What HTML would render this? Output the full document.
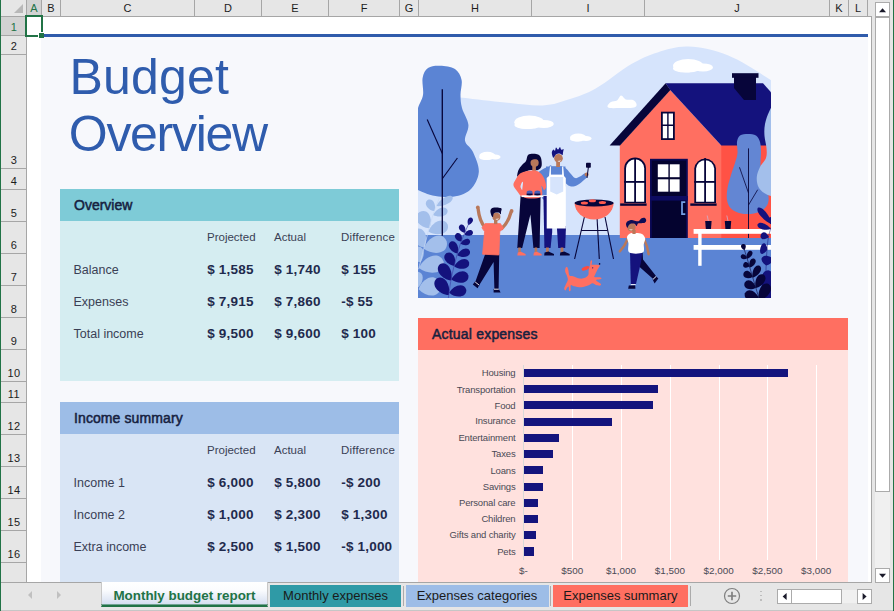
<!DOCTYPE html>
<html><head><meta charset="utf-8"><title>Budget Overview</title>
<style>
*{margin:0;padding:0;box-sizing:border-box}
html,body{width:894px;height:611px;overflow:hidden;background:#e6e6e6;font-family:"Liberation Sans",sans-serif;}
.a{position:absolute}
#root{position:relative;width:894px;height:611px;background:#e6e6e6;overflow:hidden}
.ch{position:absolute;top:0;height:16px;font-size:11px;line-height:16px;text-align:center;color:#1c1c1c;border-right:1px solid #a6a6a6}
.rh{position:absolute;left:1px;width:25px;font-size:11px;text-align:center;color:#1c1c1c;border-bottom:1px solid #a6a6a6}
.rh span{position:absolute;left:1px;right:0;bottom:0;line-height:15px;letter-spacing:0.5px}
.t{position:absolute;white-space:nowrap}
.hdt{font-size:14px;color:#16213f;-webkit-text-stroke:0.5px #16213f}
.lbl{font-size:12.5px;color:#3a3f55}
.num{font-size:13.5px;font-weight:bold;color:#1f2a4d;letter-spacing:0.2px}
.hd{font-size:11.5px;color:#3a3f55}
.cl{font-size:9.5px;color:#4a4a55;text-align:right;letter-spacing:-0.16px}
.ax{font-size:9.9px;color:#4a4a55;text-align:center}
.tab{position:absolute;top:585px;height:22px;font-size:13px;line-height:22.5px;text-align:center;color:#1a1a1a;white-space:nowrap}
</style></head><body>
<div id="root">
<div class="a" style="left:26px;top:17px;width:845px;height:565px;background:#fff;"></div>
<div class="a" style="left:41px;top:36px;width:827px;height:546px;background:#f7f8fc;"></div>
<div class="a" style="left:41px;top:34px;width:827px;height:3px;background:#2f5bab;"></div>
<div class="ch" style="left:27px;width:15px;background:#d2d2d2;color:#217346;">A</div>
<div class="ch" style="left:42px;width:19px;">B</div>
<div class="ch" style="left:61px;width:134px;">C</div>
<div class="ch" style="left:195px;width:67px;">D</div>
<div class="ch" style="left:262px;width:67px;">E</div>
<div class="ch" style="left:329px;width:71px;">F</div>
<div class="ch" style="left:400px;width:19px;">G</div>
<div class="ch" style="left:419px;width:113px;">H</div>
<div class="ch" style="left:532px;width:113px;">I</div>
<div class="ch" style="left:645px;width:185px;">J</div>
<div class="ch" style="left:830px;width:19px;">K</div>
<div class="ch" style="left:849px;width:19px;">L</div>
<div class="a" style="left:0px;top:16px;width:872px;height:1px;background:#a6a6a6;"></div>
<div class="a" style="left:26px;top:0px;width:1px;height:583px;background:#a6a6a6;"></div>
<div class="a" style="left:871px;top:16px;width:1px;height:567px;background:#a6a6a6;"></div>
<div class="a" style="left:0px;top:582px;width:872px;height:1px;background:#a6a6a6;"></div>
<svg class="a" style="left:0;top:0" width="26" height="16"><path d="M23 4 L23 13 L14 13 Z" fill="#b8b8b8"/></svg>
<div class="rh" style="top:17px;height:19px;background:#d2d2d2;color:#217346;"><span>1</span></div>
<div class="rh" style="top:35px;height:20px;"><span>2</span></div>
<div class="rh" style="top:54px;height:115px;"><span>3</span></div>
<div class="rh" style="top:168px;height:22px;"><span>4</span></div>
<div class="rh" style="top:189px;height:33px;"><span>5</span></div>
<div class="rh" style="top:221px;height:33px;"><span>6</span></div>
<div class="rh" style="top:253px;height:33px;"><span>7</span></div>
<div class="rh" style="top:285px;height:33px;"><span>8</span></div>
<div class="rh" style="top:317px;height:33px;"><span>9</span></div>
<div class="rh" style="top:349px;height:33px;"><span>10</span></div>
<div class="rh" style="top:381px;height:22px;"><span>11</span></div>
<div class="rh" style="top:402px;height:33px;"><span>12</span></div>
<div class="rh" style="top:434px;height:33px;"><span>13</span></div>
<div class="rh" style="top:466px;height:33px;"><span>14</span></div>
<div class="rh" style="top:498px;height:33px;"><span>15</span></div>
<div class="rh" style="top:530px;height:33px;"><span>16</span></div>
<div class="a" style="left:25px;top:15px;width:18px;height:22px;border:2px solid #217346"></div>
<div class="a" style="left:38px;top:32px;width:6px;height:6px;background:#fff;"></div>
<div class="a" style="left:39px;top:33px;width:5px;height:5px;background:#217346;"></div>
<div class="t " style="left:69.5px;top:48.7px;font-size:50px;line-height:56px;color:#2f5cad;letter-spacing:0.2px">Budget</div>
<div class="t " style="left:68.8px;top:106px;font-size:50px;line-height:56px;color:#2f5cad;letter-spacing:-1.3px">Overview</div>
<div class="a" style="left:60px;top:189px;width:339px;height:32px;background:#7ecbd7;"></div>
<div class="a" style="left:60px;top:221px;width:339px;height:160px;background:#d5edf1;"></div>
<div class="t hdt" style="left:74px;top:197px;">Overview</div>
<div class="t hd" style="left:207px;top:231px;">Projected</div>
<div class="t hd" style="left:274px;top:231px;">Actual</div>
<div class="t hd" style="left:341px;top:231px;letter-spacing:0.18px">Difference</div>
<div class="t lbl" style="left:73.5px;top:263px;">Balance</div>
<div class="t num" style="left:207.2px;top:261.6px;">$ 1,585</div>
<div class="t num" style="left:274.2px;top:261.6px;">$ 1,740</div>
<div class="t num" style="left:341.2px;top:261.6px;">$ 155</div>
<div class="t lbl" style="left:73.5px;top:295px;">Expenses</div>
<div class="t num" style="left:207.2px;top:293.6px;">$ 7,915</div>
<div class="t num" style="left:274.2px;top:293.6px;">$ 7,860</div>
<div class="t num" style="left:341.2px;top:293.6px;">-$ 55</div>
<div class="t lbl" style="left:73.5px;top:327px;">Total income</div>
<div class="t num" style="left:207.2px;top:325.6px;">$ 9,500</div>
<div class="t num" style="left:274.2px;top:325.6px;">$ 9,600</div>
<div class="t num" style="left:341.2px;top:325.6px;">$ 100</div>
<div class="a" style="left:60px;top:402px;width:339px;height:32px;background:#9dbde7;"></div>
<div class="a" style="left:60px;top:434px;width:339px;height:148px;background:#d9e5f5;"></div>
<div class="t hdt" style="left:74px;top:410px;letter-spacing:0.1px">Income summary</div>
<div class="t hd" style="left:207px;top:444px;">Projected</div>
<div class="t hd" style="left:274px;top:444px;">Actual</div>
<div class="t hd" style="left:341px;top:444px;letter-spacing:0.18px">Difference</div>
<div class="t lbl" style="left:73.5px;top:476px;">Income 1</div>
<div class="t num" style="left:207.2px;top:474.6px;">$ 6,000</div>
<div class="t num" style="left:274.2px;top:474.6px;">$ 5,800</div>
<div class="t num" style="left:341.2px;top:474.6px;">-$ 200</div>
<div class="t lbl" style="left:73.5px;top:508px;">Income 2</div>
<div class="t num" style="left:207.2px;top:506.6px;">$ 1,000</div>
<div class="t num" style="left:274.2px;top:506.6px;">$ 2,300</div>
<div class="t num" style="left:341.2px;top:506.6px;">$ 1,300</div>
<div class="t lbl" style="left:73.5px;top:540px;">Extra income</div>
<div class="t num" style="left:207.2px;top:538.6px;">$ 2,500</div>
<div class="t num" style="left:274.2px;top:538.6px;">$ 1,500</div>
<div class="t num" style="left:341.2px;top:538.6px;">-$ 1,000</div>
<div class="a" style="left:418px;top:318px;width:430px;height:32px;background:#ff6f61;"></div>
<div class="a" style="left:418px;top:350px;width:430px;height:232px;background:#ffe1de;"></div>
<div class="t hdt" style="left:432px;top:326px;letter-spacing:0.2px">Actual expenses</div>
<div class="a" style="left:572px;top:365px;width:1px;height:195px;background:#fff;"></div>
<div class="a" style="left:621px;top:365px;width:1px;height:195px;background:#fff;"></div>
<div class="a" style="left:670px;top:365px;width:1px;height:195px;background:#fff;"></div>
<div class="a" style="left:719px;top:365px;width:1px;height:195px;background:#fff;"></div>
<div class="a" style="left:767px;top:365px;width:1px;height:195px;background:#fff;"></div>
<div class="a" style="left:816px;top:365px;width:1px;height:195px;background:#fff;"></div>
<div class="a" style="left:523px;top:365px;width:1px;height:195px;background:#d9d9d9;"></div>
<div class="a" style="left:524px;top:369px;width:264px;height:8px;background:#14147d;"></div>
<div class="t cl" style="left:417.5px;width:98px;top:367px">Housing</div>
<div class="a" style="left:524px;top:385px;width:134px;height:8px;background:#14147d;"></div>
<div class="t cl" style="left:417.5px;width:98px;top:383.7px">Transportation</div>
<div class="a" style="left:524px;top:401px;width:129px;height:8px;background:#14147d;"></div>
<div class="t cl" style="left:417.5px;width:98px;top:400.3px">Food</div>
<div class="a" style="left:524px;top:418px;width:88px;height:8px;background:#14147d;"></div>
<div class="t cl" style="left:417.5px;width:98px;top:415.3px">Insurance</div>
<div class="a" style="left:524px;top:434px;width:35px;height:8px;background:#14147d;"></div>
<div class="t cl" style="left:417.5px;width:98px;top:431.8px">Entertainment</div>
<div class="a" style="left:524px;top:450px;width:29px;height:8px;background:#14147d;"></div>
<div class="t cl" style="left:417.5px;width:98px;top:448px">Taxes</div>
<div class="a" style="left:524px;top:466px;width:19px;height:8px;background:#14147d;"></div>
<div class="t cl" style="left:417.5px;width:98px;top:465px">Loans</div>
<div class="a" style="left:524px;top:483px;width:19px;height:8px;background:#14147d;"></div>
<div class="t cl" style="left:417.5px;width:98px;top:481.2px">Savings</div>
<div class="a" style="left:524px;top:499px;width:14px;height:8px;background:#14147d;"></div>
<div class="t cl" style="left:417.5px;width:98px;top:496.6px">Personal care</div>
<div class="a" style="left:524px;top:515px;width:14px;height:8px;background:#14147d;"></div>
<div class="t cl" style="left:417.5px;width:98px;top:512.8px">Children</div>
<div class="a" style="left:524px;top:531px;width:12px;height:8px;background:#14147d;"></div>
<div class="t cl" style="left:417.5px;width:98px;top:529px">Gifts and charity</div>
<div class="a" style="left:524px;top:547px;width:10px;height:9px;background:#14147d;"></div>
<div class="t cl" style="left:417.5px;width:98px;top:545.7px">Pets</div>
<div class="t ax" style="left:493.4px;width:60px;top:564.6px">$-</div>
<div class="t ax" style="left:542.2px;width:60px;top:564.6px">$500</div>
<div class="t ax" style="left:591px;width:60px;top:564.6px">$1,000</div>
<div class="t ax" style="left:639.8px;width:60px;top:564.6px">$1,500</div>
<div class="t ax" style="left:688.6px;width:60px;top:564.6px">$2,000</div>
<div class="t ax" style="left:737.4px;width:60px;top:564.6px">$2,500</div>
<div class="t ax" style="left:786.2px;width:60px;top:564.6px">$3,000</div>
<svg class="a" style="left:418px;top:40px" width="353" height="258" viewBox="418 40 353 258">
<defs><clipPath id="cl"><rect x="418" y="40" width="353" height="258"/></clipPath></defs><g clip-path="url(#cl)">
<path d="M436.0,97.3 C439.8,97.3 447.9,96.7 458.6,97.5 C469.3,98.3 486.0,100.7 500.0,102.0 C514.0,103.3 530.9,105.9 542.6,105.4 C554.3,104.9 561.1,101.8 570.0,99.0 C578.9,96.2 585.5,94.4 595.7,88.6 C605.9,82.8 620.7,70.3 631.0,64.3 C641.3,58.3 648.0,55.3 657.6,52.4 C667.2,49.5 676.7,46.1 688.5,46.6 C700.3,47.1 714.7,50.0 728.3,55.5 C741.9,61.0 760.0,73.2 770.3,79.8 C780.6,86.4 786.7,92.5 790.0,95.0 L790,236 L410,236 L410,112 L436,112 Z" fill="#d6e4fc" />
<g fill="#fff"><ellipse cx="529.3" cy="122.3" rx="15.0" ry="6.7"/><ellipse cx="543.9" cy="123.9" rx="9.9" ry="4.0"/><ellipse cx="526.1" cy="125.0" rx="11.8" ry="4.0"/></g>
<g fill="#fff"><ellipse cx="578.2" cy="137.5" rx="8.2" ry="4.0"/><ellipse cx="586.1" cy="138.5" rx="5.4" ry="2.4"/><ellipse cx="576.5" cy="139.1" rx="6.5" ry="2.4"/></g>
<g fill="#fff"><ellipse cx="487.3" cy="155.9" rx="8.1" ry="4.1"/><ellipse cx="495.2" cy="156.9" rx="5.3" ry="2.5"/><ellipse cx="485.6" cy="157.5" rx="6.4" ry="2.5"/></g>
<g fill="#fff"><ellipse cx="688.2" cy="65.8" rx="15.2" ry="6.8"/><ellipse cx="703.0" cy="67.4" rx="10.0" ry="4.0"/><ellipse cx="685.0" cy="68.5" rx="12.0" ry="4.0"/></g>
<path d="M607.5,106.0 C607.7,105.0 609.4,102.9 611.0,102.0 C612.6,101.1 615.3,101.6 617.0,100.5 C618.7,99.4 619.5,95.7 621.0,95.5 C622.5,95.3 624.0,98.8 626.0,99.5 C628.0,100.2 631.2,99.2 633.0,100.0 C634.8,100.8 636.3,102.8 636.5,104.0 C636.7,105.2 636.8,106.8 634.0,107.5 C631.2,108.2 624.0,107.9 620.0,108.0 C616.0,108.1 612.1,108.3 610.0,108.0 C607.9,107.7 607.3,107.0 607.5,106.0Z" fill="#ffffff" />
<rect x="410.0" y="235.0" width="380.0" height="70.0" fill="#5b84d4" />
<rect x="721.0" y="145.0" width="60.0" height="93.0" fill="#ff5245" />
<path d="M619.8,145.4 L670.2,90 L721.3,145.4 L721.3,238 L619.8,238 Z" fill="#ff6f61" />
<path d="M665.6,83.2 L763,83.2 L773,94.4 L773,145.4 L721.3,145.4 L670.2,90 Z" fill="#14127d" />
<path d="M665.6,83.2 L670.4,90 L620,145.4 L609.6,145.4 Z" fill="#07053a" />
<path d="M734,77 L756,77 L756,100 L744,100 L734,88 Z" fill="#07053a" />
<rect x="732.0" y="73.2" width="26.5" height="4.6" fill="#07053a" />
<rect x="661.0" y="111.7" width="13.8" height="28.3" fill="#07053a" />
<rect x="662.8" y="113.5" width="4.4" height="11.0" fill="#ffffff" />
<rect x="668.6" y="113.5" width="4.4" height="11.0" fill="#ffffff" />
<rect x="662.8" y="126.0" width="4.4" height="12.2" fill="#ffffff" />
<rect x="668.6" y="126.0" width="4.4" height="12.2" fill="#ffffff" />
<path d="M624.2,203.0 L624.2,168.4 A10.9,10.9 0 0 1 646.0,168.4 L646.0,203.0 Z" fill="#07053a" />
<path d="M626.0,201.8 L626.0,168.4 A9.1,9.1 0 0 1 644.2,168.4 L644.2,201.8 Z" fill="#ffffff" />
<rect x="634.2" y="158.1" width="1.8" height="44.9" fill="#07053a" />
<rect x="624.2" y="181.0" width="21.8" height="1.8" fill="#07053a" />
<rect x="620.2" y="203.4" width="26.4" height="2.4" fill="#07053a" />
<path d="M694.3,203.0 L694.3,168.4 A10.9,10.9 0 0 1 716.0,168.4 L716.0,203.0 Z" fill="#07053a" />
<path d="M696.1,201.8 L696.1,168.4 A9.1,9.1 0 0 1 714.2,168.4 L714.2,201.8 Z" fill="#ffffff" />
<rect x="704.2" y="158.1" width="1.8" height="44.9" fill="#07053a" />
<rect x="694.3" y="181.0" width="21.7" height="1.8" fill="#07053a" />
<rect x="690.3" y="203.4" width="26.3" height="2.4" fill="#07053a" />
<rect x="650.0" y="158.8" width="37.8" height="79.2" fill="#0b0955" />
<rect x="651.8" y="160.6" width="34.2" height="77.4" fill="#04032f" />
<rect x="657.8" y="164.3" width="10.6" height="12.9" fill="#ffffff" />
<rect x="669.8" y="164.3" width="9.8" height="12.9" fill="#ffffff" />
<rect x="657.8" y="179.3" width="10.6" height="12.4" fill="#ffffff" />
<rect x="669.8" y="179.3" width="9.8" height="12.4" fill="#ffffff" />
<rect x="650.0" y="196.0" width="37.8" height="4.6" fill="#0d0b60" />
<path d="M685.3,202.2 H682 V214.2 H685.3" fill="none" stroke="#76a2e8" stroke-width="1.7"/>
<path d="M748.0,134.0 C745.3,134.0 741.8,134.2 740.0,135.5 C738.2,136.8 737.4,139.1 737.0,142.0 C736.6,144.9 737.8,149.5 737.5,153.0 C737.2,156.5 736.1,159.3 735.0,163.0 C733.9,166.7 732.2,170.8 731.0,175.0 C729.8,179.2 728.2,183.8 727.5,188.0 C726.8,192.2 726.4,196.6 727.0,200.0 C727.6,203.4 728.7,206.2 731.0,208.5 C733.3,210.8 737.2,212.7 741.0,213.5 C744.8,214.3 750.2,214.2 754.0,213.5 C757.8,212.8 761.6,211.1 764.0,209.0 C766.4,206.9 768.0,204.5 768.5,201.0 C769.0,197.5 768.1,192.2 767.0,188.0 C765.9,183.8 763.1,179.8 762.0,176.0 C760.9,172.2 760.7,169.0 760.5,165.0 C760.3,161.0 761.1,155.8 761.0,152.0 C760.9,148.2 760.8,144.8 760.0,142.0 C759.2,139.2 758.0,136.8 756.0,135.5 C754.0,134.2 750.7,134.0 748.0,134.0Z" fill="#6386d3" />
<line x1="748.5" y1="148.4" x2="748.5" y2="238.0" stroke="#07053a" stroke-width="0.90" stroke-linecap="butt"/>
<line x1="748.5" y1="193.0" x2="739.5" y2="167.3" stroke="#07053a" stroke-width="0.80" stroke-linecap="butt"/>
<line x1="748.5" y1="205.0" x2="757.7" y2="189.7" stroke="#07053a" stroke-width="0.80" stroke-linecap="butt"/>
<path d="M775.0,104.0 C771.5,105.3 770.7,108.7 769.0,112.0 C767.3,115.3 765.8,120.0 765.0,124.0 C764.2,128.0 764.2,132.0 764.5,136.0 C764.8,140.0 766.2,144.3 766.5,148.0 C766.8,151.7 767.1,154.8 766.0,158.0 C764.9,161.2 761.5,163.8 760.0,167.0 C758.5,170.2 757.0,173.7 756.8,177.0 C756.5,180.3 757.1,184.2 758.5,187.0 C759.9,189.8 762.2,192.0 765.0,193.5 C767.8,195.0 770.8,196.6 775.0,196.0 C779.2,195.4 787.5,205.3 790.0,190.0 C792.5,174.7 792.5,118.3 790.0,104.0 C787.5,89.7 778.5,102.7 775.0,104.0Z" fill="#a3bfeb" />
<rect x="693.6" y="229.0" width="90.0" height="4.8" fill="#ffffff" />
<rect x="693.6" y="245.0" width="90.0" height="4.8" fill="#ffffff" />
<rect x="698.2" y="233.0" width="3.4" height="32.8" fill="#ffffff" />
<path d="M705.2,221 L711.6,221 L711.0,229 L705.8,229 Z" fill="#07053a" />
<line x1="708.4" y1="221.0" x2="707.2" y2="215.5" stroke="#c9b8d8" stroke-width="0.70" stroke-linecap="butt"/>
<path d="M724.8,221 L731.2,221 L730.6,229 L725.4,229 Z" fill="#07053a" />
<line x1="728.0" y1="221.0" x2="726.8" y2="215.5" stroke="#c9b8d8" stroke-width="0.70" stroke-linecap="butt"/>
<path d="M772.0,224.2 C770.7,216.8 762.2,205.4 757.9,207.7 C754.9,211.6 764.8,221.7 772.0,224.2Z" fill="#14127d" />
<path d="M772.0,224.8 C775.2,221.9 775.3,216.8 770.8,217.1 C766.4,218.1 768.1,223.0 772.0,224.8Z" fill="#14127d" />
<path d="M770.9,229.1 C768.1,224.3 759.6,220.4 757.5,224.4 C756.7,228.9 765.7,231.1 770.9,229.1Z" fill="#14127d" />
<path d="M768.8,237.1 C767.5,232.4 762.5,229.9 760.7,234.9 C759.6,240.0 765.2,240.5 768.8,237.1Z" fill="#14127d" />
<path d="M767.3,249.8 C766.9,243.0 762.8,240.3 760.4,247.9 C758.7,255.8 763.6,255.4 767.3,249.8Z" fill="#14127d" />
<path d="M766.3,265.4 C773.3,263.4 775.7,257.4 767.5,255.9 C759.2,255.3 760.1,261.7 766.3,265.4Z" fill="#14127d" />
<path d="M766.9,296.6 C775.0,289.1 777.7,272.1 768.2,270.3 C758.5,271.1 759.6,288.3 766.9,296.6Z" fill="#14127d" />
<path d="M767.0,300.3 C775.2,297.5 778.4,289.1 769.0,287.0 C759.4,286.2 760.0,295.2 767.0,300.3Z" fill="#14127d" />
<path d="M772.0,225.0 C771.3,227.5 769.0,232.5 768.0,240.0 C767.0,247.5 766.2,260.0 766.0,270.0 C765.8,280.0 766.8,295.0 767.0,300.0" fill="none" stroke="#14127d" stroke-width="0.5"/>
<path d="M744.4,250.1 C746.6,247.5 746.3,243.4 742.8,244.1 C739.5,245.3 741.2,249.0 744.4,250.1Z" fill="#07053a" />
<path d="M747.1,258.3 C746.4,254.8 742.7,252.4 740.9,255.7 C739.8,259.2 744.1,260.2 747.1,258.3Z" fill="#07053a" />
<path d="M747.2,258.7 C751.0,257.7 754.4,253.1 751.4,250.9 C747.9,249.6 745.9,254.9 747.2,258.7Z" fill="#07053a" />
<path d="M749.5,266.6 C749.0,262.8 745.3,260.2 743.4,263.9 C742.0,267.8 746.3,268.8 749.5,266.6Z" fill="#07053a" />
<path d="M749.8,267.4 C754.1,266.4 757.9,261.1 754.4,258.7 C750.5,257.2 748.2,263.2 749.8,267.4Z" fill="#07053a" />
<path d="M752.6,276.9 C751.6,271.9 746.2,268.3 743.6,273.0 C742.0,278.0 748.2,279.6 752.6,276.9Z" fill="#07053a" />
<path d="M752.8,277.7 C758.5,276.2 763.8,269.0 759.6,265.8 C754.7,263.8 751.2,272.1 752.8,277.7Z" fill="#07053a" />
<path d="M755.8,287.7 C754.5,281.6 747.8,277.2 744.6,282.8 C742.6,288.9 750.4,290.9 755.8,287.7Z" fill="#07053a" />
<path d="M755.9,288.1 C762.7,286.5 768.7,278.4 763.5,274.6 C757.5,272.2 753.7,281.5 755.9,288.1Z" fill="#07053a" />
<path d="M759.1,298.8 C756.9,291.7 748.2,286.7 744.9,293.2 C742.9,300.2 752.7,302.4 759.1,298.8Z" fill="#07053a" />
<path d="M759.2,300.6 C767.4,298.6 774.8,288.7 768.6,284.0 C761.4,281.1 756.7,292.6 759.2,300.6Z" fill="#07053a" />
<path d="M743.0,245.7 C743.7,247.8 745.5,253.1 747.0,258.0 C748.5,262.9 750.0,268.2 752.0,275.0 C754.0,281.8 758.0,295.0 759.2,299.0" fill="none" stroke="#07053a" stroke-width="0.6"/>
<path d="M440.0,65.7 C435.5,65.5 430.9,66.0 428.0,68.0 C425.1,70.0 423.4,73.5 422.6,78.0 C421.8,82.5 423.8,90.0 423.0,95.0 C422.2,100.0 419.8,102.2 418.0,108.0 C416.2,113.8 413.0,118.0 412.0,130.0 C411.0,142.0 409.8,169.5 412.0,180.0 C414.2,190.5 418.7,190.2 425.0,193.0 C431.3,195.8 442.5,197.5 450.0,197.0 C457.5,196.5 465.2,194.2 470.0,190.0 C474.8,185.8 478.3,178.3 478.8,172.0 C479.3,165.7 475.3,157.2 473.0,152.0 C470.7,146.8 465.8,145.3 465.0,140.8 C464.2,136.3 468.9,130.3 468.4,124.8 C467.9,119.3 463.3,113.0 462.0,108.0 C460.7,103.0 460.6,99.7 460.5,95.0 C460.4,90.3 462.5,84.3 461.6,80.0 C460.7,75.7 458.6,71.4 455.0,69.0 C451.4,66.6 444.5,65.9 440.0,65.7Z" fill="#5b84d4" />
<path d="M436.3,206.1 C443.2,207.0 454.3,201.9 452.6,197.0 C449.3,193.0 439.2,199.8 436.3,206.1Z" fill="#a3bfeb" />
<path d="M434.5,211.1 C436.6,205.2 433.1,197.3 427.6,199.9 C422.8,203.7 428.3,210.3 434.5,211.1Z" fill="#a3bfeb" />
<path d="M433.1,215.1 C439.0,218.3 448.8,216.2 447.5,210.0 C444.7,204.4 435.7,208.8 433.1,215.1Z" fill="#a3bfeb" />
<path d="M429.3,228.3 C433.4,219.2 428.8,207.5 419.5,211.9 C411.2,218.0 419.3,227.6 429.3,228.3Z" fill="#a3bfeb" />
<path d="M428.4,231.6 C436.8,236.8 450.0,234.1 447.8,224.7 C443.6,216.0 431.6,222.3 428.4,231.6Z" fill="#a3bfeb" />
<path d="M424.1,247.6 C429.0,238.4 425.0,225.4 415.1,229.1 C406.0,234.6 413.8,245.8 424.1,247.6Z" fill="#a3bfeb" />
<path d="M423.8,248.8 C433.7,256.1 449.4,253.7 446.7,241.4 C441.8,229.9 427.6,237.1 423.8,248.8Z" fill="#a3bfeb" />
<path d="M420.4,262.2 C426.4,254.5 424.4,243.9 414.3,247.1 C404.8,251.8 410.7,260.9 420.4,262.2Z" fill="#a3bfeb" />
<path d="M418.9,268.1 C428.8,275.8 445.5,274.0 443.6,261.6 C439.2,249.9 423.7,256.5 418.9,268.1Z" fill="#a3bfeb" />
<path d="M418.6,287.2 C425.2,280.1 424.1,269.6 413.8,272.1 C403.9,276.0 409.1,285.3 418.6,287.2Z" fill="#a3bfeb" />
<path d="M418.6,289.2 C427.3,298.4 441.9,298.1 440.2,284.7 C436.4,271.8 422.9,277.3 418.6,289.2Z" fill="#a3bfeb" />
<path d="M418.6,269.2 C419.5,265.7 421.8,256.5 424.0,248.0 C426.2,239.5 429.4,226.3 432.0,218.0 C434.6,209.7 438.1,201.3 439.3,198.0" fill="none" stroke="#c9daf5" stroke-width="0.7"/>
<line x1="442.3" y1="89.3" x2="442.3" y2="235.8" stroke="#07053a" stroke-width="1.35" stroke-linecap="butt"/>
<line x1="442.3" y1="153.5" x2="427.2" y2="119.5" stroke="#07053a" stroke-width="1.10" stroke-linecap="butt"/>
<line x1="442.3" y1="178.7" x2="457.4" y2="158.0" stroke="#07053a" stroke-width="1.10" stroke-linecap="butt"/>
<path d="M468.3,225.0 C471.9,224.1 474.8,219.6 471.6,217.7 C468.1,216.5 466.6,221.6 468.3,225.0Z" fill="#14127d" />
<path d="M465.0,232.8 C466.5,228.6 463.9,223.0 460.1,225.0 C456.7,227.7 460.6,232.3 465.0,232.8Z" fill="#14127d" />
<path d="M464.3,234.5 C467.8,236.8 473.6,235.9 472.9,231.9 C471.3,228.2 466.0,230.7 464.3,234.5Z" fill="#14127d" />
<path d="M461.4,241.6 C463.1,237.2 460.6,231.4 456.3,233.5 C452.5,236.5 456.6,241.3 461.4,241.6Z" fill="#14127d" />
<path d="M460.5,243.8 C464.4,246.4 470.8,245.3 470.0,240.9 C468.2,236.8 462.3,239.5 460.5,243.8Z" fill="#14127d" />
<path d="M457.7,253.5 C459.7,247.4 456.1,239.2 450.6,241.7 C445.7,245.5 451.4,252.5 457.7,253.5Z" fill="#14127d" />
<path d="M457.3,255.2 C462.5,258.5 471.1,257.1 469.9,251.2 C467.5,245.8 459.7,249.5 457.3,255.2Z" fill="#14127d" />
<path d="M454.4,265.9 C456.9,259.0 453.0,249.9 446.5,253.0 C440.7,257.4 447.1,265.1 454.4,265.9Z" fill="#14127d" />
<path d="M454.3,266.5 C460.2,270.6 470.2,269.2 469.1,262.4 C466.5,255.9 457.2,260.0 454.3,266.5Z" fill="#14127d" />
<path d="M451.1,280.6 C453.6,271.8 448.0,260.0 440.2,263.9 C433.5,269.4 442.0,279.4 451.1,280.6Z" fill="#14127d" />
<path d="M451.3,279.6 C458.0,284.8 469.5,283.7 468.4,275.4 C465.5,267.6 454.8,271.9 451.3,279.6Z" fill="#14127d" />
<path d="M448.8,295.1 C451.2,285.8 444.9,273.8 436.7,278.4 C429.8,284.7 439.1,294.5 448.8,295.1Z" fill="#14127d" />
<path d="M449.2,292.7 C455.4,298.4 466.8,298.1 466.3,289.8 C464.0,281.7 453.2,285.3 449.2,292.7Z" fill="#14127d" />
<path d="M448.3,298.0 C448.9,294.2 450.1,283.8 452.0,275.0 C453.9,266.2 457.0,254.0 460.0,245.0 C463.0,236.0 468.2,225.0 469.9,221.0" fill="none" stroke="#3a3aa5" stroke-width="0.6"/>
<path d="M552.0,166.5 C551.3,166.5 547.0,167.2 545.0,168.0 C543.0,168.8 541.5,169.9 540.0,171.0 C538.5,172.1 536.3,173.0 536.0,174.5 C535.7,176.0 537.2,178.1 538.0,180.0 C538.8,181.9 540.3,183.0 541.0,186.0 C541.7,189.0 540.7,196.0 542.0,198.0 C543.3,200.0 547.8,203.0 549.0,198.0 C550.2,193.0 548.5,173.2 549.0,168.0 C549.5,162.8 552.7,166.5 552.0,166.5Z" fill="#5b84d4" />
<path d="M533.0,153.7 C531.3,153.8 529.2,153.8 528.0,155.0 C526.8,156.2 527.0,159.3 526.0,161.0 C525.0,162.7 523.2,163.5 522.0,165.0 C520.8,166.5 519.3,168.1 518.5,170.0 C517.7,171.9 516.9,175.8 517.3,176.5 C517.7,177.2 519.5,174.8 521.0,174.0 C522.5,173.2 524.3,172.2 526.0,171.5 C527.7,170.8 529.0,170.2 531.0,170.0 C533.0,169.8 536.2,170.7 538.0,170.0 C539.8,169.3 541.1,168.0 541.6,166.0 C542.1,164.0 541.6,159.9 541.0,158.0 C540.4,156.1 539.3,155.2 538.0,154.5 C536.7,153.8 534.7,153.6 533.0,153.7Z" fill="#07053a" />
<circle cx="534.6" cy="162.8" r="4.1" fill="#b9785a"/>
<rect x="532.3" y="165.0" width="3.6" height="6.5" fill="#b9785a" />
<path d="M529.5,161.0 C529.2,160.6 530.1,157.8 531.0,157.0 C531.9,156.2 533.7,156.1 535.0,156.3 C536.3,156.5 538.2,157.1 539.0,158.0 C539.8,158.9 540.2,161.2 540.0,161.5 C539.8,161.8 538.7,159.8 537.5,159.5 C536.3,159.2 534.3,159.2 533.0,159.5 C531.7,159.8 529.8,161.4 529.5,161.0Z" fill="#07053a" />
<path d="M520.6,196 L540.6,196 L539.6,248 L533.4,248 L530.4,214.6 L522.2,248 L517.3,248 Z" fill="#07053a" />
<rect x="518.2" y="247.5" width="2.6" height="5.0" fill="#b9785a" />
<rect x="534.6" y="247.5" width="2.6" height="5.0" fill="#b9785a" />
<path d="M517.3,255.6 L517.8,252.6 L521,251.8 L525.6,254 L525.6,255.6 Z" fill="#ff6f61" />
<path d="M533.4,255.6 L533.9,252.6 L537,251.8 L541.6,254 L541.6,255.6 Z" fill="#ff6f61" />
<path d="M527.0,171.0 C524.7,171.5 521.8,172.2 520.0,173.5 C518.2,174.8 517.1,177.1 516.0,179.0 C514.9,180.9 513.2,183.0 513.4,185.0 C513.6,187.0 515.6,189.1 517.0,191.0 C518.4,192.9 520.3,196.1 521.5,196.5 C522.7,196.9 524.2,195.1 524.0,193.5 C523.8,191.9 520.7,188.9 520.5,187.0 C520.3,185.1 522.5,180.3 523.0,182.0 C523.5,183.7 520.5,194.5 523.5,197.0 C526.5,199.5 538.0,198.8 541.0,197.0 C544.0,195.2 541.0,187.2 541.5,186.0 C542.0,184.8 543.2,190.0 544.0,190.0 C544.8,190.0 546.3,188.2 546.2,186.0 C546.1,183.8 544.7,179.3 543.5,177.0 C542.3,174.7 540.6,173.1 539.0,172.0 C537.4,170.9 536.0,170.7 534.0,170.5 C532.0,170.3 529.3,170.5 527.0,171.0Z" fill="#ff6f61" />
<rect x="521.5" y="195.3" width="26.0" height="1.8" fill="#ffffff" />
<ellipse cx="529.6" cy="193" rx="3" ry="2.4" fill="#4b5fb8"/>
<rect x="526.6" y="193.6" width="6.0" height="1.6" fill="#07053a" />
<ellipse cx="537.4" cy="193" rx="3" ry="2.4" fill="#4b5fb8"/>
<rect x="534.4" y="193.6" width="6.0" height="1.6" fill="#07053a" />
<rect x="546.0" y="166.5" width="19.5" height="20.0" fill="#5b84d4" />
<path d="M560.0,166.5 C560.7,164.9 564.3,167.4 566.0,168.5 C567.7,169.6 568.5,171.4 570.0,173.0 C571.5,174.6 573.3,177.4 575.0,178.0 C576.7,178.6 578.2,177.3 580.0,176.5 C581.8,175.7 584.2,173.1 585.5,173.0 C586.8,172.9 587.8,174.8 587.5,176.0 C587.2,177.2 585.7,178.5 584.0,180.0 C582.3,181.5 579.7,183.9 577.5,185.0 C575.3,186.1 572.9,186.8 571.0,186.5 C569.1,186.2 567.5,184.9 566.0,183.5 C564.5,182.1 563.0,180.8 562.0,178.0 C561.0,175.2 559.3,168.1 560.0,166.5Z" fill="#5b84d4" />
<path d="M543.4,196 L552.4,196 L552.2,232 L550.6,248 L544.4,248 Z" fill="#14127d" />
<path d="M556.8,226 L566,226 L565.2,248 L558.2,248 Z" fill="#14127d" />
<rect x="546.0" y="247.5" width="2.8" height="5.0" fill="#b9785a" />
<rect x="560.6" y="247.5" width="2.8" height="5.0" fill="#b9785a" />
<path d="M544.2,255.6 L544.6,252.4 L548.5,251.6 L554,254 L554,255.6 Z" fill="#07053a" />
<path d="M559.9,255.6 L560.3,252.4 L564.2,251.6 L569.7,254 L569.7,255.6 Z" fill="#07053a" />
<path d="M550,166.5 L563.2,166.5 L564,176 L565.8,178 L565.8,228.4 L546.7,228.4 L546.7,178 L549,176 Z" fill="#ffffff" />
<path d="M550.2,177 L563.2,177 L563.2,191.5 L556.7,194.4 L550.2,191.5 Z" fill="#d6e4fc" />
<rect x="550.9" y="166.2" width="11.2" height="8.4" fill="#5b84d4" />
<rect x="556.2" y="160.0" width="3.8" height="7.0" fill="#b9785a" />
<circle cx="558.5" cy="158.3" r="4.3" fill="#b9785a"/>
<path d="M553.0,157.5 C552.6,156.8 551.7,153.8 551.8,152.5 C551.9,151.2 553.0,149.8 553.5,149.5 C554.0,149.2 554.6,151.1 555.0,150.8 C555.4,150.5 555.5,147.7 556.0,147.5 C556.5,147.3 557.3,149.6 558.0,149.5 C558.7,149.4 559.5,146.8 560.0,146.9 C560.5,147.0 560.7,149.5 561.3,149.8 C561.9,150.2 563.2,148.6 563.5,149.0 C563.8,149.4 563.2,151.5 563.0,152.5 C562.8,153.5 563.1,154.8 562.5,155.0 C561.9,155.2 560.6,153.6 559.5,153.5 C558.4,153.4 556.9,153.9 556.0,154.5 C555.1,155.1 554.7,156.5 554.2,157.0 C553.7,157.5 553.4,158.2 553.0,157.5Z" fill="#14127d" />
<path d="M557.5,161 Q559.5,162.6 561.4,160.6 Z" fill="#fff"/>
<circle cx="586.6" cy="174.6" r="2" fill="#b9785a"/>
<line x1="587.0" y1="178.0" x2="588.4" y2="167.0" stroke="#07053a" stroke-width="1.00" stroke-linecap="butt"/>
<rect x="586.0" y="162.8" width="4.8" height="5.0" fill="#07053a" rx="0.8"/>
<line x1="584.4" y1="217.0" x2="574.6" y2="259.0" stroke="#07053a" stroke-width="1.10" stroke-linecap="butt"/>
<line x1="596.9" y1="215.0" x2="599.3" y2="259.0" stroke="#07053a" stroke-width="1.10" stroke-linecap="butt"/>
<line x1="605.0" y1="217.0" x2="613.5" y2="259.0" stroke="#07053a" stroke-width="1.10" stroke-linecap="butt"/>
<line x1="581.0" y1="230.5" x2="607.5" y2="230.5" stroke="#07053a" stroke-width="1.00" stroke-linecap="butt"/>
<path d="M574.6,203 A19.5,16.5 0 0 0 613.6,203 Z" fill="#ff6f61" />
<ellipse cx="594.1" cy="203" rx="19.5" ry="3.6" fill="#07053a"/>
<ellipse cx="584.4" cy="203.0" rx="3.6" ry="1.5" fill="#ff5a4e"/>
<ellipse cx="592.4" cy="200.8" rx="3.6" ry="1.5" fill="#ff5a4e"/>
<ellipse cx="602.4" cy="202.6" rx="3.6" ry="1.5" fill="#ff5a4e"/>
<path d="M484.8,227 Q479.5,221 478.2,209.5" stroke="#b9785a" stroke-width="3.3" stroke-linecap="round" fill="none"/>
<path d="M501.8,228.5 Q508,223 510.9,212.5" stroke="#b9785a" stroke-width="3.3" stroke-linecap="round" fill="none"/>
<circle cx="477.8" cy="207.4" r="1.9" fill="#b9785a"/>
<circle cx="511.6" cy="211" r="1.9" fill="#b9785a"/>
<path d="M485.2,254 L499.2,254 L498.6,289.5 L494.4,289.5 L493.6,262 L479,285.5 L475,282.8 Z" fill="#07053a" />
<path d="M472.8,284.5 L475.3,281.3 L479.6,284.6 L477.6,288.2 Z" fill="#07053a" />
<path d="M493.6,289 L498.8,289 L500.6,292.6 L493.6,292.6 Z" fill="#07053a" />
<line x1="475.2" y1="282.0" x2="479.0" y2="285.0" stroke="#fff" stroke-width="0.90" stroke-linecap="butt"/>
<line x1="494.0" y1="289.2" x2="498.8" y2="289.2" stroke="#fff" stroke-width="0.90" stroke-linecap="butt"/>
<path d="M485.2,223.6 L500.4,223.6 L503.5,228.4 L499.8,231.4 L498.9,255 L482.6,254.2 L484.6,231.6 L481.9,227.8 Z" fill="#ff6f61" stroke="#ff6f61" stroke-width="0.8" stroke-linejoin="round"/>
<rect x="494.0" y="219.5" width="3.4" height="4.6" fill="#b9785a" />
<circle cx="496.4" cy="216.8" r="4" fill="#b9785a"/>
<path d="M491.6,216.0 C491.2,215.1 490.4,212.8 490.4,211.6 C490.4,210.4 490.8,209.3 491.6,208.6 C492.4,207.9 493.8,207.7 495.0,207.6 C496.2,207.5 497.9,207.6 499.0,207.8 C500.1,208.0 501.3,208.1 501.6,208.8 C501.9,209.5 501.1,211.1 501.0,212.0 C500.9,212.9 501.2,214.1 500.8,214.2 C500.4,214.3 499.6,212.8 498.6,212.6 C497.6,212.4 495.9,212.5 495.0,212.8 C494.1,213.1 493.7,213.7 493.4,214.4 C493.1,215.1 493.3,216.7 493.0,217.0 C492.7,217.3 492.0,216.9 491.6,216.0Z" fill="#07053a" />
<path d="M495.4,219 Q497.4,220.6 499.2,218.6 Z" fill="#fff"/>
<path d="M628,238.5 Q625,246 619.8,251.4" stroke="#b9785a" stroke-width="2.5" stroke-linecap="round" fill="none"/>
<path d="M644.2,239.5 Q647.5,246 648.6,254.2" stroke="#b9785a" stroke-width="2.5" stroke-linecap="round" fill="none"/>
<path d="M637,252 L642.6,252 L643,259.5 L656,276 L653.2,279 L638.5,266 Z" fill="#07053a" />
<path d="M630,251.5 L642.5,251.5 L641,262 L636,284 L630.8,284 Z" fill="#14127d" />
<path d="M628.2,288.8 L628.8,285.6 L635.2,285.2 L635.4,288.8 Z" fill="#07053a" />
<path d="M652.6,279.6 L656,276.2 L658.3,278.6 L654.6,283.4 Z" fill="#07053a" />
<line x1="630.8" y1="284.6" x2="635.6" y2="284.6" stroke="#fff" stroke-width="0.90" stroke-linecap="butt"/>
<line x1="653.0" y1="279.4" x2="656.2" y2="276.4" stroke="#fff" stroke-width="0.90" stroke-linecap="butt"/>
<path d="M630.0,233.4 C628.5,234.1 627.3,235.4 627.0,237.0 C626.7,238.6 628.0,240.4 628.4,243.0 C628.8,245.6 627.0,251.0 629.4,252.6 C631.8,254.2 640.4,254.0 642.8,252.6 C645.2,251.2 643.4,246.3 643.8,244.0 C644.2,241.7 645.5,240.2 645.2,238.5 C644.9,236.8 643.5,234.9 642.0,234.0 C640.5,233.1 638.0,233.1 636.0,233.0 C634.0,232.9 631.5,232.7 630.0,233.4Z" fill="#ffffff" />
<rect x="632.4" y="230.0" width="3.2" height="4.0" fill="#b9785a" />
<circle cx="631.4" cy="227.3" r="4.1" fill="#b9785a"/>
<path d="M627.3,227.8 C626.9,227.6 625.9,225.1 626.0,224.0 C626.1,222.9 627.0,221.7 628.0,221.0 C629.0,220.3 630.7,219.9 632.0,219.9 C633.3,219.9 634.5,220.8 635.6,221.0 C636.7,221.2 637.7,221.6 638.6,221.2 C639.5,220.8 640.2,219.0 641.2,218.4 C642.2,217.8 643.8,217.5 644.6,217.8 C645.4,218.1 646.2,219.4 646.2,220.2 C646.2,221.0 645.6,222.3 644.8,222.8 C644.0,223.3 642.5,223.1 641.4,223.2 C640.3,223.3 638.8,222.9 638.0,223.4 C637.2,223.9 637.2,225.9 636.6,226.0 C636.0,226.1 635.5,224.2 634.6,223.8 C633.7,223.4 632.0,223.3 631.0,223.6 C630.0,223.9 629.2,224.7 628.6,225.4 C628.0,226.1 627.7,228.0 627.3,227.8Z" fill="#0f0d55" />
<path d="M629,229.6 Q630.8,231.2 632.8,229.4 Z" fill="#fff"/>
<path d="M567.0,266.8 C567.5,267.1 567.9,268.6 568.3,270.0 C568.7,271.4 568.7,274.5 569.5,275.5 C570.3,276.5 571.3,275.7 573.0,276.2 C574.7,276.7 577.8,278.3 579.8,278.6 C581.8,278.9 583.6,278.4 585.0,277.8 C586.4,277.2 587.7,276.1 588.3,275.0 C588.9,273.9 588.4,272.4 588.6,271.0 C588.8,269.6 589.1,267.6 589.5,266.5 C589.9,265.4 590.0,264.9 590.8,264.6 C591.5,264.3 592.5,264.7 594.0,264.8 C595.5,264.9 598.9,264.7 599.6,265.2 C600.4,265.7 598.9,267.1 598.5,268.0 C598.1,268.9 597.5,269.4 597.0,270.5 C596.5,271.6 595.6,273.4 595.2,274.5 C594.8,275.6 593.6,276.5 594.5,277.0 C595.4,277.5 599.4,277.1 600.5,277.4 C601.6,277.7 601.8,278.5 601.0,279.0 C600.2,279.5 596.0,279.4 596.0,280.2 C596.0,281.0 600.1,282.9 600.8,283.8 C601.5,284.7 600.8,285.4 600.0,285.6 C599.2,285.8 597.2,285.4 596.0,285.0 C594.8,284.6 593.8,283.1 592.5,283.2 C591.2,283.3 589.8,284.8 588.0,285.5 C586.2,286.2 583.8,287.2 581.5,287.3 C579.2,287.4 575.8,286.7 574.0,286.3 C572.2,285.9 571.4,284.5 570.8,285.2 C570.2,285.9 570.9,289.7 570.6,290.6 C570.3,291.5 569.3,291.5 569.0,290.8 C568.7,290.1 569.0,286.9 568.6,286.5 C568.2,286.1 567.1,287.8 566.6,288.5 C566.1,289.2 566.0,290.6 565.6,290.6 C565.2,290.6 564.1,289.7 564.2,288.6 C564.3,287.5 565.4,285.4 566.0,284.0 C566.6,282.6 567.6,281.3 567.8,280.0 C568.0,278.7 567.4,277.3 567.0,276.0 C566.6,274.7 565.6,273.2 565.3,272.0 C565.0,270.8 565.1,269.4 565.4,268.5 C565.7,267.6 566.5,266.6 567.0,266.8Z" fill="#ff6f61" />
<path d="M590.6,266.0 C591.9,264.4 592.7,260.7 591.5,260.2 C590.2,260.3 589.9,264.1 590.6,266.0Z" fill="#ff6f61" />
<ellipse cx="585.4" cy="268.3" rx="1.8" ry="4.0" fill="#ff4a3d" transform="rotate(68 585.4 268.3)"/>
<circle cx="599.6" cy="263.9" r="0.8" fill="#07053a"/><circle cx="592.7" cy="267.8" r="0.6" fill="#14127d"/>
</g></svg>
<div class="a" style="left:875px;top:2px;width:15px;height:15px;background:#fff;border:1px solid #ababab"></div>
<div class="a" style="left:875px;top:17px;width:15px;height:475px;background:#fff;border:1px solid #ababab"></div>
<div class="a" style="left:875px;top:492px;width:15px;height:76px;background:#f0f0f0;"></div>
<div class="a" style="left:875px;top:568px;width:15px;height:15px;background:#fff;border:1px solid #ababab"></div>
<svg class="a" style="left:875px;top:2px" width="15" height="15"><path d="M4 10.3 L11 10.3 L7.5 6.3 Z" fill="#1a1a2a"/></svg>
<svg class="a" style="left:875px;top:568px" width="15" height="15"><path d="M4 5.8 L11 5.8 L7.5 9.8 Z" fill="#1a1a2a"/></svg>
<svg class="a" style="left:20px;top:588px" width="50" height="16"><path d="M12 3 L12 11 L8 7 Z M37 3 L37 11 L41 7 Z" fill="#c0c0c0"/></svg>
<div class="tab" style="left:101px;width:167px;top:582px;height:25px;line-height:27.5px;background:linear-gradient(to bottom,#ffffff 0%,#fbfcfe 35%,#d3ddf0 100%);color:#217346;font-weight:bold;font-size:13.4px;border-left:1px solid #c8c8c8;border-right:1px solid #c8c8c8;border-bottom:2px solid #217346">Monthly budget report</div>
<div class="a" style="left:101px;top:604px;width:167px;height:1px;background:rgba(33,115,70,0.55);"></div>
<div class="tab" style="left:270px;width:131px;background:#2f9aa6">Monthly expenses</div>
<div class="a" style="left:403px;top:586px;width:1px;height:20px;background:#ababab;"></div>
<div class="tab" style="left:405.5px;width:143px;background:#9dbde7">Expenses categories</div>
<div class="a" style="left:550px;top:586px;width:1px;height:20px;background:#ababab;"></div>
<div class="tab" style="left:552.7px;width:135.5px;background:#ff6f61">Expenses summary</div>
<div class="a" style="left:690px;top:586px;width:1px;height:20px;background:#ababab;"></div>
<svg class="a" style="left:721.8px;top:585.7px" width="20" height="20"><circle cx="10" cy="10" r="7.5" fill="none" stroke="#7f7f7f" stroke-width="1.2"/><path d="M10 5.8 V14.2 M5.8 10 H14.2" stroke="#7f7f7f" stroke-width="1.7"/></svg>
<div class="a" style="left:760.2px;top:590.7px;width:1.6px;height:1.6px;background:#bdbdbd;"></div>
<div class="a" style="left:760.2px;top:594.9px;width:1.6px;height:1.6px;background:#bdbdbd;"></div>
<div class="a" style="left:760.2px;top:599.2px;width:1.6px;height:1.6px;background:#bdbdbd;"></div>
<div class="a" style="left:777px;top:589px;width:15px;height:15px;background:#fff;border:1px solid #ababab"></div>
<div class="a" style="left:791px;top:589px;width:51px;height:15px;background:#fff;border:1px solid #ababab"></div>
<div class="a" style="left:842px;top:590px;width:15px;height:13px;background:#f0f0f0;"></div>
<div class="a" style="left:857px;top:589px;width:15px;height:15px;background:#fff;border:1px solid #ababab"></div>
<svg class="a" style="left:777px;top:589px" width="15" height="15"><path d="M9.6 4 L9.6 11 L5.6 7.5 Z" fill="#1a1a2a"/></svg>
<svg class="a" style="left:857px;top:589px" width="15" height="15"><path d="M5.6 4 L5.6 11 L9.6 7.5 Z" fill="#1a1a2a"/></svg>
<div class="a" style="left:0px;top:610px;width:894px;height:1px;background:#c6c6c6;"></div>
<div class="a" style="left:0px;top:0px;width:1px;height:611px;background:#217346;"></div>
<div class="a" style="left:893px;top:0px;width:1px;height:611px;background:#217346;"></div>
</div>
</body></html>
